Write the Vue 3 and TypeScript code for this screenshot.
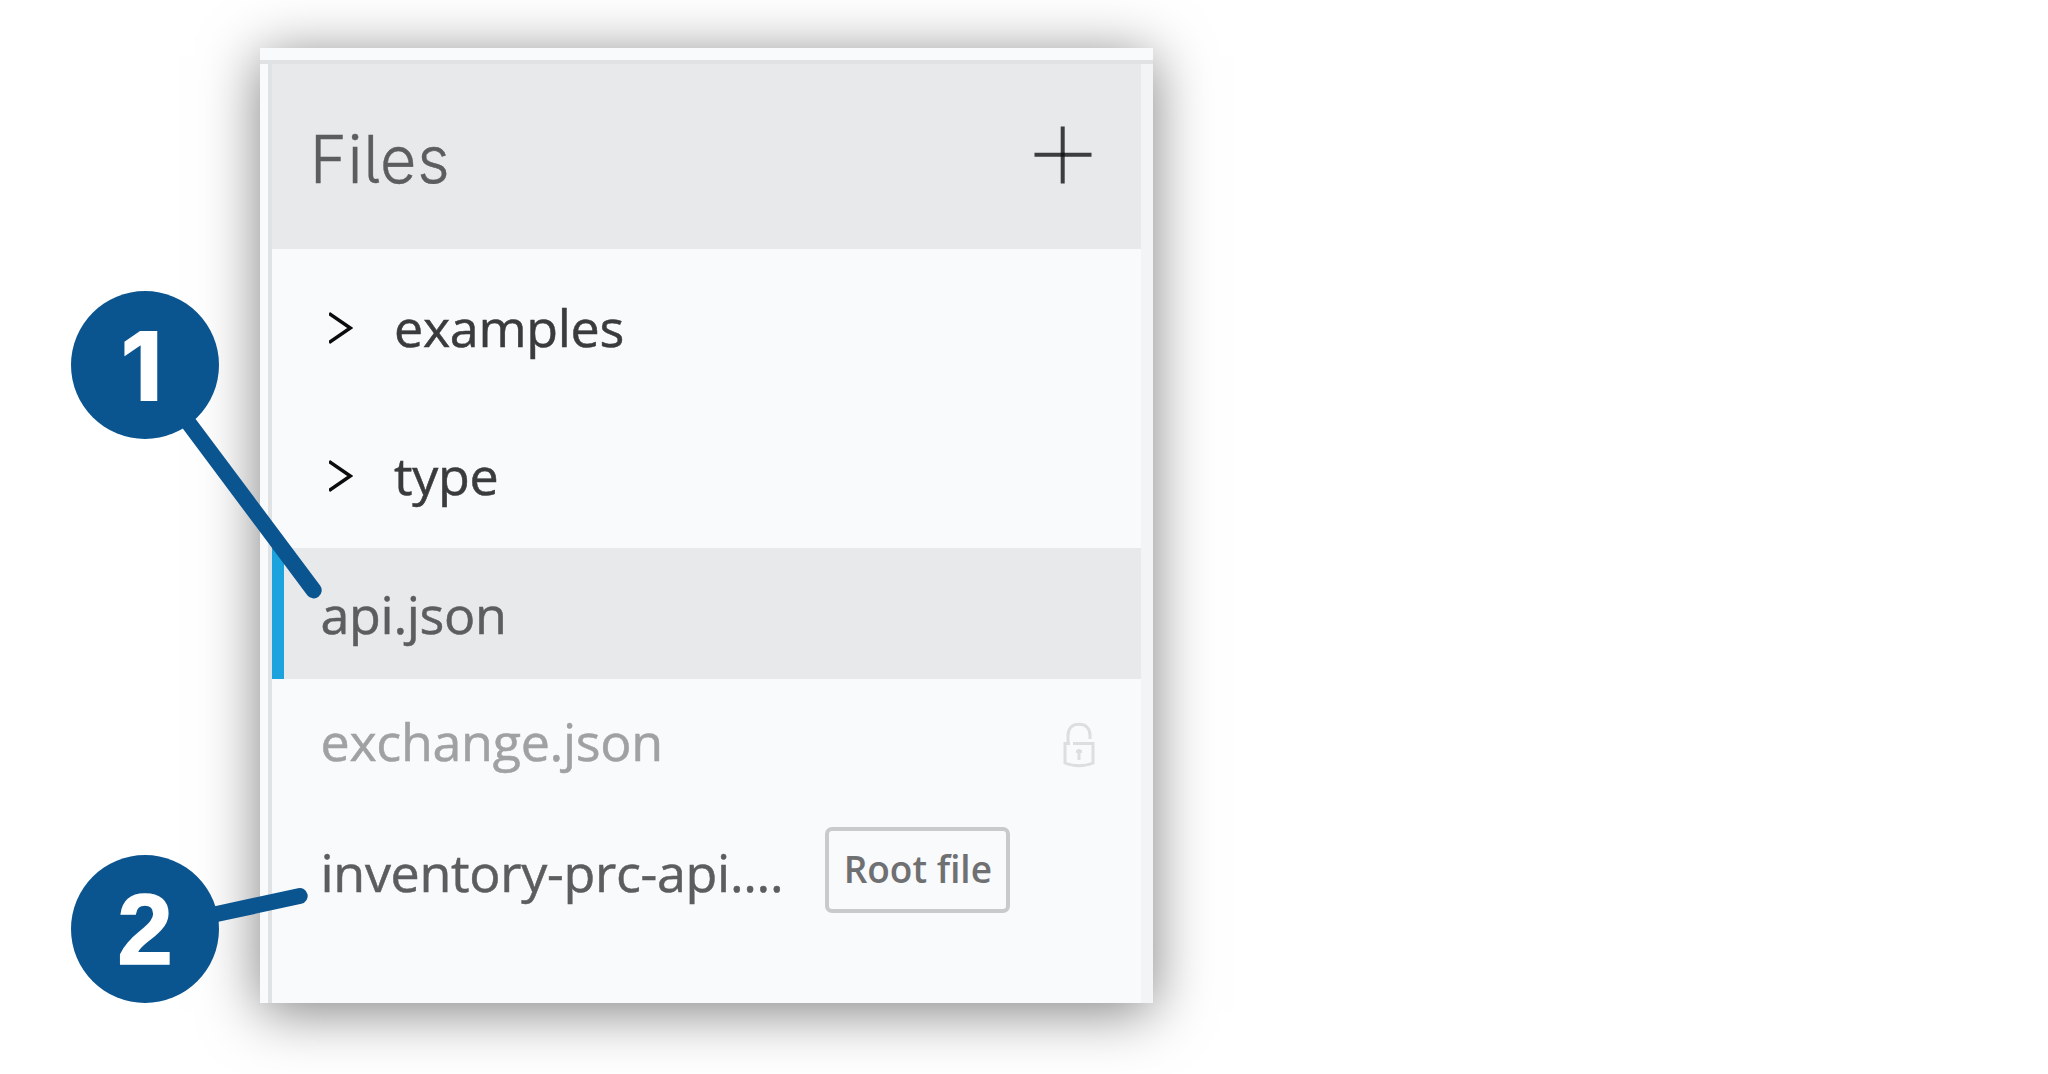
<script setup lang="ts">
interface FileRow {
  name: string
  kind: 'folder' | 'file'
  state?: 'selected' | 'locked' | 'root'
}

const rows: FileRow[] = [
  { name: 'examples', kind: 'folder' },
  { name: 'type', kind: 'folder' },
  { name: 'api.json', kind: 'file', state: 'selected' },
  { name: 'exchange.json', kind: 'file', state: 'locked' },
  { name: 'inventory-prc-api....', kind: 'file', state: 'root' },
]
</script>

<template>
  <main class="page">
    <section class="panel">
      <div class="content">
        <header class="head">
          <h1 class="title">Files</h1>
          <svg class="plus" viewBox="0 0 58 58">
            <path d="M0.5 28.7H57.5M28.7 0.5V57.5" />
            <rect x="26.7" y="26.7" width="4" height="4" />
          </svg>
        </header>
        <ul class="tree">
          <li v-for="row in rows" :key="row.name" class="row" :class="[row.kind, row.state]">
            <svg v-if="row.kind === 'folder'" class="chevron" viewBox="0 0 24 34">
              <path d="M0 2.5L21.3 17L0 31.5" />
            </svg>
            <span class="name">{{ row.name }}</span>
            <svg v-if="row.state === 'locked'" class="lock" viewBox="0 0 32 46">
              <path d="M5 22V13.5C5 6 9.500 2.200 16 2.200S27 6 27 13.500V17" />
              <path d="M7 21.500H2V41C10 44.600 22 44.600 30 41V21.500H10" />
              <path d="M16 27V38M13 29.500H19" />
            </svg>
            <span v-if="row.state === 'root'" class="badge">Root file</span>
          </li>
        </ul>
      </div>
    </section>

    <svg class="leaders" viewBox="0 0 2048 1074">
      <path d="M186 419.500L313.700 590.400" />
      <path d="M205 916.500L299.700 896" />
    </svg>
    <div class="pin one">1</div>
    <div class="pin two">2</div>
  </main>
</template>

<style>
body {
  background: #fff;
  overflow: hidden;
}
</style>

<style scoped>
.page {
  position: relative;
  box-sizing: border-box;
  width: 2048px;
  height: 1074px;
  padding: 48px 0 0 260px;
  overflow: hidden;
  font-family: "Open Sans", "Noto Sans", sans-serif;
}
.panel {
  box-sizing: border-box;
  width: 893px;
  height: 955px;
  padding-top: 12px;
  background: #f9fafc;
  box-shadow: 0 8px 54px rgba(0, 0, 0, 0.5);
}
.content {
  box-sizing: border-box;
  height: 943px;
  border-top: 4px solid #e1e2e4;
  padding-left: 8px;
  background: linear-gradient(to right, #f9fafc 881px, #f3f4f6 881px);
  padding-right: 12px;
  display: flex;
  flex-direction: column;
}
.head {
  box-sizing: border-box;
  height: 184.500px;
  flex: none;
  border-left: 4px solid #e1e2e4;
  background: #e8e9eb;
  display: flex;
  align-items: flex-start;
  justify-content: space-between;
  padding: 0 49px 0 38px;
}
.title {
  margin: 52.500px 0 0;
  font: 300 66px/84px Inter, sans-serif;
  font-feature-settings: "cv05";
  letter-spacing: 1px;
  color: #5c5d5f;
  -webkit-text-stroke: 0.4px #5c5d5f;
  transform: scaleX(0.95);
  transform-origin: left;
}
.plus {
  width: 58px;
  height: 58px;
  margin-top: 61.500px;
}
.plus path {
  stroke: #3c3d3f;
  stroke-width: 4;
}
.plus rect {
  fill: #151617;
}
.tree {
  flex: 1;
  margin: 0;
  padding: 3.500px 0 0;
  list-style: none;
  border-left: 4px solid #e1e2e4;
}
.row {
  box-sizing: border-box;
  display: flex;
  align-items: center;
  font-size: 52px;
  letter-spacing: -0.300px;
  line-height: 72px;
  color: #5c5d5f;
}
.name {
  padding-top: 1px;
  white-space: nowrap;
  -webkit-text-stroke: 0.5px currentColor;
}
.folder {
  height: 148px;
  padding-left: 57px;
  color: #3a3b3d;
}
.chevron {
  width: 24px;
  height: 34px;
  margin: 4px 41px 0 0;
}
.chevron path {
  fill: none;
  stroke: #0c0c0d;
  stroke-width: 3.500;
}
.file {
  height: 131px;
  padding-left: 48.500px;
}
.selected {
  border-left: 12px solid #1ca3de;
  padding-left: 36.500px;
  background: #e8e9eb;
}
.locked {
  height: 122px;
  color: #a0a1a2;
}
.root {
  height: 140px;
}
.lock {
  width: 32px;
  height: 46px;
  margin: 9px 46px 0 auto;
}
.lock path {
  fill: none;
  stroke: #dddedf;
  stroke-width: 3;
}
.badge {
  box-sizing: border-box;
  width: 185px;
  height: 86px;
  margin: -3px 0 0 42px;
  border: 4px solid #c9cacc;
  border-radius: 7px;
  font-size: 37px;
  font-weight: 600;
  letter-spacing: 0;
  line-height: 76px;
  text-align: center;
  color: #6f7072;
}
.leaders {
  position: absolute;
  inset: 0;
  width: 2048px;
  height: 1074px;
}
.leaders path {
  stroke: #0a5490;
  stroke-width: 16;
  stroke-linecap: round;
}
.pin {
  position: absolute;
  box-sizing: border-box;
  left: 71px;
  width: 148px;
  height: 148px;
  border-radius: 50%;
  background: #0a5490;
  color: #fff;
  text-align: center;
}
.one {
  top: 291.400px;
  padding-right: 7px;
  font: 800 96px/150px Inter, sans-serif;
}
.two {
  top: 855px;
  font: 700 100px/149px "Liberation Sans", sans-serif;
  -webkit-text-stroke: 1.500px #fff;
}
</style>
